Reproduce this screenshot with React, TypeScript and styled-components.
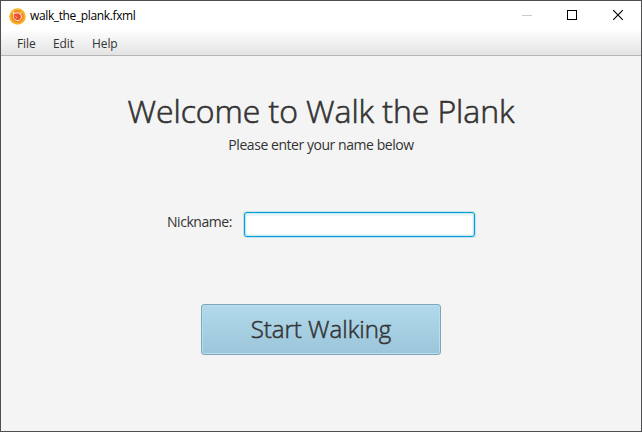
import React from "react";
import styled, { createGlobalStyle } from "styled-components";

const GlobalStyle = createGlobalStyle`
  * { box-sizing: border-box; }
  body { margin: 0; overflow: hidden; }
`;

const Window = styled.div`
  width: 642px;
  height: 432px;
  display: flex;
  flex-direction: column;
  border: 1px solid #504e55;
  background: #f4f4f4;
  color: #333;
  font-family: "Open Sans", "Noto Sans", sans-serif;
  font-size: 14px;
`;

const TitleBar = styled.header`
  height: 30px;
  flex: none;
  display: flex;
  align-items: center;
  padding-left: 8px;
  background: #fff;
`;

const WindowTitle = styled.div`
  flex: 1;
  margin-left: 4px;
  color: #000;
  font-size: 12px;
  line-height: 30px;
  letter-spacing: -0.37px;
  white-space: nowrap;
`;

const Controls = styled.div`
  display: flex;
`;

const ControlButton = styled.button<{ $muted?: boolean }>`
  display: flex;
  width: 46px;
  height: 30px;
  padding: 8px 0 0 ${(p) => (p.$muted ? 19 : 18)}px;
  border: 0;
  background: transparent;
  color: ${(p) => (p.$muted ? "#ccc" : "#000")};
`;

const MenuBar = styled.nav`
  height: 25px;
  flex: none;
  display: flex;
  gap: 18px;
  padding-left: 16px;
  background: linear-gradient(#fdfdfd, #e3e3e3);
  border-bottom: 1px solid #b5b5b5;
`;

const MenuItem = styled.span<{ $width: number }>`
  width: ${(p) => p.$width}px;
  font-size: 12px;
  line-height: 26px;
  letter-spacing: -0.1px;
  white-space: nowrap;
`;

const Content = styled.main`
  flex: 1;
  display: flex;
  flex-direction: column;
  align-items: center;
`;

const Heading = styled.h1`
  margin: 33px 0 0;
  font-size: 32px;
  font-weight: 300;
  line-height: 44px;
  letter-spacing: -0.07px;
  -webkit-text-stroke: 0.6px #333;
  white-space: nowrap;
`;

const Subtitle = styled.p`
  margin: 2px 0 0;
  line-height: 20px;
  letter-spacing: -0.45px;
  white-space: nowrap;
`;

const Field = styled.label`
  display: flex;
  align-items: center;
  width: 308px;
  height: 25px;
  margin-top: 57px;
`;

const FieldLabel = styled.span`
  width: 77px;
  line-height: 20px;
  margin-top: -5px;
  letter-spacing: -0.45px;
  white-space: nowrap;
`;

const TextInput = styled.input`
  width: 231px;
  height: 25px;
  padding: 0 7px;
  border: 1px solid #039ed3;
  border-radius: 3px;
  outline: none;
  background: #fff;
  font: inherit;
  box-shadow: 0 0 0 1px rgba(3, 158, 211, 0.2), inset 0 0 0 1px #c4e9f5,
    inset 0 2px 0 1px #e8f6fa, inset 0 0 0 2px #edf8fc;
`;

const StartButton = styled.button`
  width: 240px;
  height: 51px;
  margin-top: 67px;
  padding: 0 0 2px;
  border: 1px solid #7ba7ba;
  border-radius: 3px;
  background: linear-gradient(#b1daec, #9dc5da);
  box-shadow: inset 0 0 0 1px #bcdeec;
  color: #333;
  font-family: inherit;
  font-size: 24px;
  font-weight: 300;
  line-height: 47px;
  -webkit-text-stroke: 0.5px #333;
  white-space: nowrap;
`;

function AppIcon() {
  return (
    <svg width="17" height="17" viewBox="0 0 17 17">
      <circle cx="8.5" cy="8.5" r="8.3" fill="#f8b62c" />
      <circle cx="8.5" cy="8.5" r="6.4" fill="#f38d22" />
      <path d="M4 4.2l2.3 1.2c2-1 4.4-.6 5.5.9 1.3 2 .7 4.6-1.2 5.7-2 1.1-4.5.4-5.6-1.6-.7-1.3-.6-2.4-.2-3.5z" fill="#ee4f28" stroke="#fff0e5" strokeWidth="1" />
      <path d="M10 6.3l3-2.2M6.5 8.2l1.4 1.8" stroke="#ffe3d0" strokeWidth=".8" />
    </svg>
  );
}

export default function App() {
  return (
    <>
      <GlobalStyle />
      <Window>
        <TitleBar>
          <AppIcon />
          <WindowTitle>walk_the_plank.fxml</WindowTitle>
          <Controls>
            <ControlButton $muted aria-label="Minimize">
              <svg width="12" height="12" shapeRendering="crispEdges">
                <path d="M0 6.5h10" stroke="currentColor" />
              </svg>
            </ControlButton>
            <ControlButton aria-label="Maximize">
              <svg width="12" height="12" shapeRendering="crispEdges">
                <path d="M.5 1.5h9v9h-9z" fill="none" stroke="currentColor" />
              </svg>
            </ControlButton>
            <ControlButton aria-label="Close">
              <svg width="12" height="12">
                <path d="M.2 1.2l9.6 9.6M9.8 1.2L.2 10.8" stroke="currentColor" strokeWidth="1.1" />
              </svg>
            </ControlButton>
          </Controls>
        </TitleBar>
        <MenuBar>
          <MenuItem $width={18}>File</MenuItem>
          <MenuItem $width={21}>Edit</MenuItem>
          <MenuItem $width={26}>Help</MenuItem>
        </MenuBar>
        <Content>
          <Heading>Welcome to Walk the Plank</Heading>
          <Subtitle>Please enter your name below</Subtitle>
          <Field>
            <FieldLabel>Nickname:</FieldLabel>
            <TextInput aria-label="Nickname" />
          </Field>
          <StartButton>Start Walking</StartButton>
        </Content>
      </Window>
    </>
  );
}
